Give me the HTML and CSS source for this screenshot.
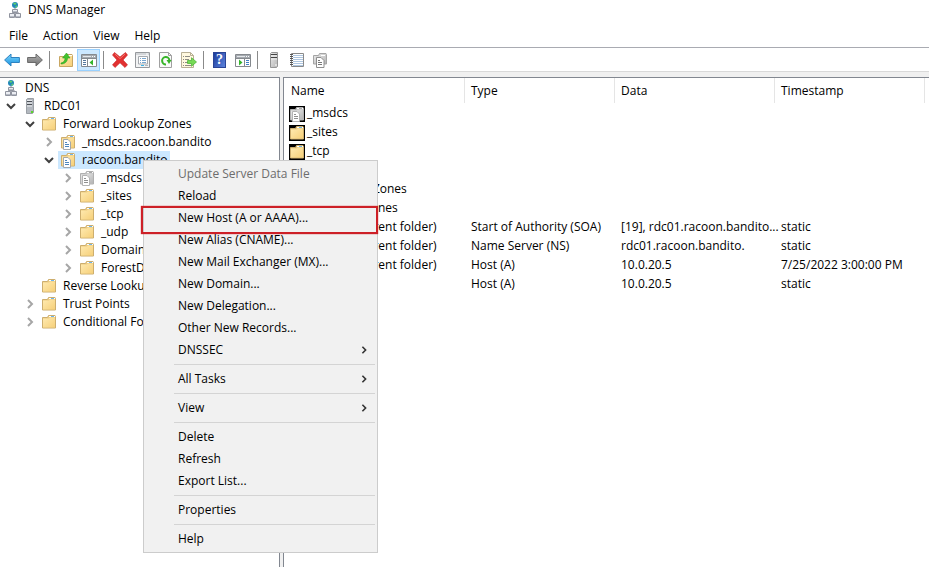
FILE: index.html
```html
<!DOCTYPE html>
<html lang="en">

<head>
  <meta charset="UTF-8">
  <meta name="viewport" content="width=device-width, initial-scale=1.0">
  <title>DNS Manager</title>
  <link rel="stylesheet" href="styles.css">
</head>

<body>
  <svg class="sprite" aria-hidden="true">
    <defs>
      <linearGradient id="gold" x1="0" y1="0" x2="1" y2="1">
        <stop offset="0" stop-color="#ffeab0"/>
        <stop offset="1" stop-color="#f6d07a"/>
      </linearGradient>
      <linearGradient id="silver" x1="0" y1="0" x2="1" y2="1">
        <stop offset="0" stop-color="#ececec"/>
        <stop offset="1" stop-color="#b4b4b4"/>
      </linearGradient>
      <linearGradient id="blue" x1="0" y1="0" x2="0" y2="1">
        <stop offset="0" stop-color="#7fd4fb"/>
        <stop offset="1" stop-color="#1592e0"/>
      </linearGradient>
      <linearGradient id="grey" x1="0" y1="0" x2="0" y2="1">
        <stop offset="0" stop-color="#b4b4b4"/>
        <stop offset="1" stop-color="#6e6e6e"/>
      </linearGradient>
    </defs>
    <symbol id="dns" viewBox="0 0 16 16">
      <circle cx="8" cy="3" r="3" fill="#2387b9"/>
      <path d="M6 1.500l2-1 1.500 1L8 3zM8.500 4l2-.8-.8 2L8.500 6z" fill="#5fd06a"/>
      <path d="M8 6v2M5 13v-2h7v2" fill="none" stroke="#889"/>
      <path d="M5.500 7.500h5v3h-5zM2.500 11.500h5v4h-5zM8.500 11.500h5v4h-5z" fill="#eceef3" stroke="#90949f"/>
      <path d="M6 9.500h4M3 14.500h4M9 14.500h4" stroke="#b6bac4"/>
    </symbol>
    <symbol id="server" viewBox="0 0 16 16">
      <path d="M4.500 1.500l1-1h6v14l-1 1h-6z" fill="#b3b8bf" stroke="#9a9fa5"/>
      <path d="M5 2h5v2H5z" fill="#e5e8ec"/>
      <path d="M5 3.500h5M5 6.500h5" stroke="#4c5056"/>
      <path d="M5 5h5M5 8h5" stroke="#eef0f2"/>
      <path d="M9 13h2v2H9z" fill="#5bd62b"/>
    </symbol>
    <symbol id="server-grey" viewBox="0 0 16 16">
      <path d="M4.500 1.500l1-1h6v14l-1 1h-6z" fill="url(#silver)" stroke="#959595"/>
      <path d="M5 2.500h6M5 5.500h6" stroke="#444"/>
      <path d="M5 4h6M5 7h6" stroke="#eee"/>
      <path d="M9 13h2" stroke="#fff"/>
    </symbol>
    <symbol id="folder" viewBox="0 0 16 16">
      <path d="M1.500 3.500h5l1-2h6.500l.5 1v11.500h-13z" fill="#eccb80" stroke="#cdae6e"/>
      <path d="M8 2.500h6" stroke="#fff"/>
      <path d="M10 2.500h3" stroke="#6db4ee"/>
      <path d="M2 4.500h6l1-1h5v10H2z" fill="url(#gold)"/>
    </symbol>
    <symbol id="zone" viewBox="0 0 16 16">
      <path d="M1.500 3.500h5l1-2h6.500l.5 1v11.500h-13z" fill="#eccb80" stroke="#cdae6e"/>
      <path d="M8 2.500h6" stroke="#fff"/>
      <path d="M10 2.500h3" stroke="#6db4ee"/>
      <path d="M2 4.500h6l1-1h5v10H2z" fill="url(#gold)"/>
      <path d="M3.500 5.500h4.500l2.500 2.500v7.500h-7z" fill="#fff" stroke="#a3a8ad"/>
      <path d="M5 8.500h2M5 10.500h4M5 12.500h4" stroke="#4c86bd"/>
    </symbol>
    <symbol id="zone-grey" viewBox="0 0 16 16">
      <path d="M1.500 3.500h5l1-2h6.500l.5 1v11.500h-13z" fill="#c4c4c4" stroke="#b0b0b0"/>
      <path d="M8 2.500h6" stroke="#fff"/>
      <path d="M10 2.500h3" stroke="#a8a8a8"/>
      <path d="M2 4.500h6l1-1h5v10H2z" fill="url(#silver)"/>
      <path d="M3.500 5.500h4.500l2.500 2.500v7.500h-7z" fill="#fff" stroke="#b4b4b4"/>
      <path d="M5 8.500h2M5 10.500h4M5 12.500h4" stroke="#909090"/>
    </symbol>
    <symbol id="arrow" viewBox="0 0 16 16">
      <path d="M.6 8l6.400-6v3.500h8.400v5H7V14z"/>
    </symbol>
    <symbol id="up" viewBox="0 0 16 16">
      <path d="M1.500 4.500h6l1-2h5.500l.5 1v11h-13z" fill="url(#gold)" stroke="#c8a662"/>
      <path d="M10 3.500h4" stroke="#fff"/>
      <path d="M3 11c3-.5 4-2.500 4-5H4.500L8.500 1l3.500 5H9.500c0 3.500-2.500 6-6.500 6z" fill="#43c32c" stroke="#2fa023" stroke-width=".6"/>
    </symbol>
    <symbol id="console" viewBox="0 0 16 16">
      <path d="M.5 2.500h15v12H.5z" fill="#fff" stroke="#85898e"/>
      <path d="M1 3h14v3H1z" fill="#a5aab0"/>
      <path d="M2 4.500h8" stroke="#e4e7ea"/>
      <path d="M11 4.500h1M13 4.500h1" stroke="#fff"/>
      <path d="M1 6.500h14M6.500 7v7" stroke="#85898e"/>
      <path d="M2 8.500h3M2 10.500h3M2 12.500h3" stroke="#55779c"/>
      <path d="M12 7.500v6L8.500 10.500z" fill="#35b52c"/>
    </symbol>
    <symbol id="action" viewBox="0 0 16 16">
      <path d="M.5 2.500h15v12H.5z" fill="#fff" stroke="#85898e"/>
      <path d="M1 3h14v3H1z" fill="#a5aab0"/>
      <path d="M2 4.500h8" stroke="#e4e7ea"/>
      <path d="M11 4.500h1M13 4.500h1" stroke="#fff"/>
      <path d="M1 6.500h14M9.500 7v7" stroke="#85898e"/>
      <path d="M11 8.500h3M11 10.500h3M11 12.500h3" stroke="#3f80c3"/>
      <path d="M4 7.500v6L7.500 10.500z" fill="#35b52c"/>
    </symbol>
    <symbol id="delete" viewBox="0 0 16 16">
      <path d="M2.500.5L8 5l5.500-4.500L15.500 3 11 8l4.500 4.800-2.500 2.700-5-4.700-5 4.700L.5 12.800 5 8 .5 3z" fill="#e23030" stroke="#c42222" stroke-width=".6"/>
      <path d="M2.800 2l5.200 4.600L13.200 2" fill="none" stroke="#f2746c"/>
    </symbol>
    <symbol id="props" viewBox="0 0 16 16">
      <path d="M.5.500h14v15H.5z" fill="#f2f3f4" stroke="#96999d"/>
      <path d="M1 2h13" stroke="#b4b8bd"/>
      <path d="M11 2h2" stroke="#fff"/>
      <path d="M3.500 4.500h9v7.500h-9z" fill="#fff" stroke="#a5a9ae"/>
      <path d="M5 6.500h1M7 6.500h4M5 8.500h1M7 8.500h4M5 10.500h1M7 10.500h4" stroke="#79a6cf"/>
      <path d="M6 13.500h3" stroke="#38b5e8"/>
      <path d="M10 13.500h3" stroke="#b4b8bd"/>
    </symbol>
    <symbol id="refresh" viewBox="0 0 16 16">
      <path d="M1.500.500h9l3 3v12h-12z" fill="#fafafa" stroke="#a0a0a0"/>
      <path d="M10.500.500v3h3" fill="none" stroke="#a0a0a0"/>
      <path d="M8 12.500a3.700 3.700 0 1 1 3.500-4" fill="none" stroke="#36b428" stroke-width="2"/>
      <path d="M13.500 8h-5l2.500 4z" fill="#36b428"/>
    </symbol>
    <symbol id="export" viewBox="0 0 16 16">
      <path d="M.5.500h9l3 3v12H.5z" fill="#fff8df" stroke="#b8af94"/>
      <path d="M9.500.500v3h3" fill="none" stroke="#b8af94"/>
      <path d="M2 4.500h1M4 4.500h5M2 7.500h1M4 7.500h4M2 10.500h1M4 10.500h3M2 13.500h1M4 13.500h6" stroke="#8d8b84"/>
      <path d="M6.500 8.500h4V5.700l5 4.300-5 4.300v-2.800h-4z" fill="#76da55" stroke="#45af30" stroke-width=".7"/>
    </symbol>
    <symbol id="notebook" viewBox="0 0 16 16">
      <path d="M2.500 1.500h12v13h-12z" fill="#fff" stroke="#8a8a8a"/>
      <path d="M4 3.500h10M4 5.500h10M4 7.500h10M4 9.500h10M4 11.500h10M4 13.500h10" stroke="#aec6e0"/>
      <path d="M1 2.500h3M1 4.500h3M1 6.500h3M1 8.500h3M1 10.500h3M1 12.500h3" stroke="#555"/>
    </symbol>
    <symbol id="record" viewBox="0 0 16 16">
      <path d="M1.500 3.500h5l1-2h6.500l.5 1v9.500h-13z" fill="url(#silver)" stroke="#a5a5a5"/>
      <path d="M9 3.500h4" stroke="#fff"/>
      <path d="M4.500 5.500h4.500l3 3v7h-7.500z" fill="#fff" stroke="#8f8f8f"/>
      <path d="M6 8.500h2M6 10.500h4M6 12.500h4" stroke="#777"/>
    </symbol>
    <symbol id="chevron" viewBox="0 0 10 10">
      <path d="M3 1l4 4-4 4" fill="none" stroke="currentColor"/>
    </symbol>
  </svg>

  <div class="window">
    <header class="titlebar">
      <svg class="icon"><use href="#dns"/></svg>
      <span>DNS Manager</span>
    </header>

    <nav class="menubar">
      <button>File</button>
      <button>Action</button>
      <button>View</button>
      <button>Help</button>
    </nav>

    <div class="toolbar" role="toolbar">
      <button aria-label="Back"><svg class="icon arrow-back"><use href="#arrow"/></svg></button>
      <button aria-label="Forward"><svg class="icon arrow-forward"><use href="#arrow"/></svg></button>
      <span class="divider"></span>
      <button aria-label="Up one level"><svg class="icon"><use href="#up"/></svg></button>
      <button class="active" aria-label="Show/Hide console tree"><svg class="icon"><use href="#console"/></svg></button>
      <span class="divider"></span>
      <button aria-label="Delete"><svg class="icon"><use href="#delete"/></svg></button>
      <button aria-label="Properties"><svg class="icon"><use href="#props"/></svg></button>
      <button aria-label="Refresh"><svg class="icon"><use href="#refresh"/></svg></button>
      <button aria-label="Export list"><svg class="icon"><use href="#export"/></svg></button>
      <span class="divider"></span>
      <button class="help" aria-label="Help"><span>?</span></button>
      <button aria-label="Show/Hide action pane"><svg class="icon"><use href="#action"/></svg></button>
      <span class="divider"></span>
      <button aria-label="New server"><svg class="icon"><use href="#server-grey"/></svg></button>
      <button aria-label="New zone"><svg class="icon"><use href="#notebook"/></svg></button>
      <button aria-label="New record"><svg class="icon"><use href="#record"/></svg></button>
    </div>

    <main class="panes">
      <section class="tree">
        <div class="node"><span class="label"><svg class="icon"><use href="#dns"/></svg>DNS</span></div>
        <ul>
          <li>
            <div class="node"><button class="toggle open" aria-label="Collapse"><svg><use href="#chevron"/></svg></button><span class="label"><svg class="icon"><use href="#server"/></svg>RDC01</span></div>
            <ul>
              <li>
                <div class="node"><button class="toggle open" aria-label="Collapse"><svg><use href="#chevron"/></svg></button><span class="label"><svg class="icon"><use href="#folder"/></svg>Forward Lookup Zones</span></div>
                <ul>
                  <li><div class="node"><button class="toggle" aria-label="Expand"><svg><use href="#chevron"/></svg></button><span class="label"><svg class="icon"><use href="#zone"/></svg>_msdcs.racoon.bandito</span></div></li>
                  <li>
                    <div class="node"><button class="toggle open" aria-label="Collapse"><svg><use href="#chevron"/></svg></button><span class="label selected"><svg class="icon"><use href="#zone"/></svg>racoon.bandito</span></div>
                    <ul>
                      <li><div class="node"><button class="toggle" aria-label="Expand"><svg><use href="#chevron"/></svg></button><span class="label"><svg class="icon"><use href="#zone-grey"/></svg>_msdcs</span></div></li>
                      <li><div class="node"><button class="toggle" aria-label="Expand"><svg><use href="#chevron"/></svg></button><span class="label"><svg class="icon"><use href="#folder"/></svg>_sites</span></div></li>
                      <li><div class="node"><button class="toggle" aria-label="Expand"><svg><use href="#chevron"/></svg></button><span class="label"><svg class="icon"><use href="#folder"/></svg>_tcp</span></div></li>
                      <li><div class="node"><button class="toggle" aria-label="Expand"><svg><use href="#chevron"/></svg></button><span class="label"><svg class="icon"><use href="#folder"/></svg>_udp</span></div></li>
                      <li><div class="node"><button class="toggle" aria-label="Expand"><svg><use href="#chevron"/></svg></button><span class="label"><svg class="icon"><use href="#folder"/></svg>DomainDnsZones</span></div></li>
                      <li><div class="node"><button class="toggle" aria-label="Expand"><svg><use href="#chevron"/></svg></button><span class="label"><svg class="icon"><use href="#folder"/></svg>ForestDnsZones</span></div></li>
                    </ul>
                  </li>
                </ul>
              </li>
              <li><div class="node"><span class="toggle"></span><span class="label"><svg class="icon"><use href="#folder"/></svg>Reverse Lookup Zones</span></div></li>
              <li><div class="node"><button class="toggle" aria-label="Expand"><svg><use href="#chevron"/></svg></button><span class="label"><svg class="icon"><use href="#folder"/></svg>Trust Points</span></div></li>
              <li><div class="node"><button class="toggle" aria-label="Expand"><svg><use href="#chevron"/></svg></button><span class="label"><svg class="icon"><use href="#folder"/></svg>Conditional Forwarders</span></div></li>
            </ul>
          </li>
        </ul>
      </section>

      <section class="list">
        <table>
          <colgroup>
            <col class="col-name">
            <col class="col-type">
            <col class="col-data">
            <col class="col-time">
          </colgroup>
          <thead>
            <tr><th>Name</th><th>Type</th><th>Data</th><th>Timestamp</th></tr>
          </thead>
          <tbody>
            <tr><td><svg class="icon"><use href="#zone-grey"/></svg>_msdcs</td><td></td><td></td><td></td></tr>
            <tr><td><svg class="icon"><use href="#folder"/></svg>_sites</td><td></td><td></td><td></td></tr>
            <tr><td><svg class="icon"><use href="#folder"/></svg>_tcp</td><td></td><td></td><td></td></tr>
            <tr><td><svg class="icon"><use href="#folder"/></svg>_udp</td><td></td><td></td><td></td></tr>
            <tr><td><svg class="icon"><use href="#folder"/></svg>DomainDnsZones</td><td></td><td></td><td></td></tr>
            <tr><td><svg class="icon"><use href="#folder"/></svg>ForestDnsZones</td><td></td><td></td><td></td></tr>
            <tr><td><svg class="icon"><use href="#record"/></svg>(same as parent folder)</td><td>Start of Authority (SOA)</td><td>[19], rdc01.racoon.bandito...</td><td>static</td></tr>
            <tr><td><svg class="icon"><use href="#record"/></svg>(same as parent folder)</td><td>Name Server (NS)</td><td>rdc01.racoon.bandito.</td><td>static</td></tr>
            <tr><td><svg class="icon"><use href="#record"/></svg>(same as parent folder)</td><td>Host (A)</td><td>10.0.20.5</td><td>7/25/2022 3:00:00 PM</td></tr>
            <tr><td><svg class="icon"><use href="#record"/></svg>rdc01</td><td>Host (A)</td><td>10.0.20.5</td><td>static</td></tr>
          </tbody>
        </table>
      </section>
    </main>
  </div>

  <div class="context-menu" role="menu">
    <button role="menuitem" disabled>Update Server Data File</button>
    <button role="menuitem">Reload</button>
    <button role="menuitem" class="highlight">New Host (A or AAAA)...</button>
    <button role="menuitem">New Alias (CNAME)...</button>
    <button role="menuitem">New Mail Exchanger (MX)...</button>
    <button role="menuitem">New Domain...</button>
    <button role="menuitem">New Delegation...</button>
    <button role="menuitem">Other New Records...</button>
    <button role="menuitem">DNSSEC<svg><use href="#chevron"/></svg></button>
    <hr>
    <button role="menuitem">All Tasks<svg><use href="#chevron"/></svg></button>
    <hr>
    <button role="menuitem">View<svg><use href="#chevron"/></svg></button>
    <hr>
    <button role="menuitem">Delete</button>
    <button role="menuitem">Refresh</button>
    <button role="menuitem">Export List...</button>
    <hr>
    <button role="menuitem">Properties</button>
    <hr>
    <button role="menuitem">Help</button>
  </div>
</body>

</html>
```

FILE: styles.css
```css
* {
  box-sizing: border-box;
}

body {
  margin: 0;
  font-family: "Segoe UI", "Open Sans", "Noto Sans", sans-serif;
  font-size: 12px;
  line-height: 18px;
  color: #000;
  background: #fff;
  overflow: hidden;
}

button {
  margin: 0;
  padding: 0;
  border: none;
  background: none;
  font: inherit;
  color: inherit;
}

ul {
  list-style: none;
  margin: 0;
  padding: 0;
}

.sprite {
  position: absolute;
  width: 0;
  height: 0;
}

.icon {
  flex: none;
  width: 16px;
  height: 16px;
}

.window {
  display: flex;
  flex-direction: column;
  height: 100vh;
}

/* title, menu, toolbar */

.titlebar {
  display: flex;
  align-items: center;
  gap: 5px;
  height: 20px;
  padding-left: 7px;
}

.menubar {
  display: flex;
  align-items: center;
  gap: 15px;
  height: 28px;
  padding: 4px 9px 0;
  border-bottom: 1px solid #a9abb2;
}

.toolbar {
  display: flex;
  align-items: center;
  height: 24px;
  padding-top: 1px;
  border-bottom: 1px solid #d9d9d9;
}

.toolbar button {
  display: flex;
  align-items: center;
  justify-content: center;
  width: 23px;
  height: 22px;
}

.toolbar .active {
  background: #cce8ff;
  border: 1px solid #99d1ff;
}

.toolbar .divider {
  width: 1px;
  height: 18px;
  margin: 0 4px 0 3px;
  background: #8a8a8a;
}

.arrow-back {
  fill: url(#blue);
  stroke: #2d82c0;
}

.arrow-forward {
  fill: url(#grey);
  stroke: #6a6a6a;
  transform: scaleX(-1);
}

.toolbar .help span {
  width: 13px;
  height: 16px;
  background: linear-gradient(120deg, #1c3c9c, #5c83dc);
  border: 1px solid #2a4496;
  color: #fff;
  font: bold 14px/14px "Liberation Serif", serif;
  text-align: center;
}

/* panes */

.panes {
  flex: 1;
  display: flex;
  gap: 3px;
  min-height: 0;
  padding-top: 5px;
  background: #f0f0f0;
}

.tree,
.list {
  background: #fff;
  border-top: 1px solid #828790;
  overflow: hidden;
}

.tree {
  flex: none;
  width: 280px;
  padding: 1px 0 0 1px;
  border-right: 1px solid #828790;
}

.list {
  flex: 1;
  border-left: 1px solid #828790;
}

.tree ul ul {
  padding-left: 19px;
}

.node {
  display: flex;
  height: 18px;
}

.toggle {
  display: flex;
  align-items: center;
  justify-content: center;
  width: 19px;
  color: #a6a6a6;
}

.toggle svg {
  width: 10px;
  height: 10px;
  stroke-width: 2;
}

.toggle.open {
  color: #404040;
}

.toggle.open svg {
  transform: rotate(90deg);
}

.label {
  display: flex;
  align-items: center;
  gap: 6px;
  padding: 0 2px;
  white-space: nowrap;
}

.label.selected {
  background: #cce8ff;
}

/* record list */

table {
  table-layout: fixed;
  width: 641px;
  border-collapse: separate;
  border-spacing: 0;
}

.col-name {
  width: 181px;
}

.col-type {
  width: 150px;
}

.col-data {
  width: 160px;
}

.col-time {
  width: 150px;
}

th {
  height: 25px;
  padding: 0 6px;
  border-right: 1px solid #e5e5e5;
  font-weight: normal;
  text-align: left;
}

th:first-child {
  padding-left: 7px;
}

td {
  height: 19px;
  padding: 0 6px;
  line-height: 19px;
  white-space: nowrap;
}

td:first-child {
  padding-left: 5px;
}

td .icon {
  margin-right: 2px;
  background: #000;
  vertical-align: middle;
}

/* context menu */

.context-menu {
  position: absolute;
  top: 160px;
  left: 143px;
  width: 235px;
  padding: 2px;
  background: #f1f1f1;
  border: 1px solid #ccc;
}

.context-menu button {
  display: flex;
  align-items: center;
  justify-content: space-between;
  width: 100%;
  height: 22px;
  padding: 0 6px 0 32px;
  text-align: left;
}

.context-menu button:disabled {
  color: #6d6d6d;
}

.context-menu button svg {
  width: 10px;
  height: 10px;
  padding: 1px;
  color: #333;
  stroke-width: 2;
}

.context-menu hr {
  height: 1px;
  margin: 3px 0 3px 28px;
  border: none;
  background: #d4d4d4;
}

.context-menu .highlight {
  position: relative;
}

/* red frame drawn round the item */
.context-menu .highlight::after {
  content: '';
  position: absolute;
  inset: -1px -3px -5px -5px;
  border: 2px solid #cd2027;
  box-shadow: 0 0 1px #cd2027;
}
```
